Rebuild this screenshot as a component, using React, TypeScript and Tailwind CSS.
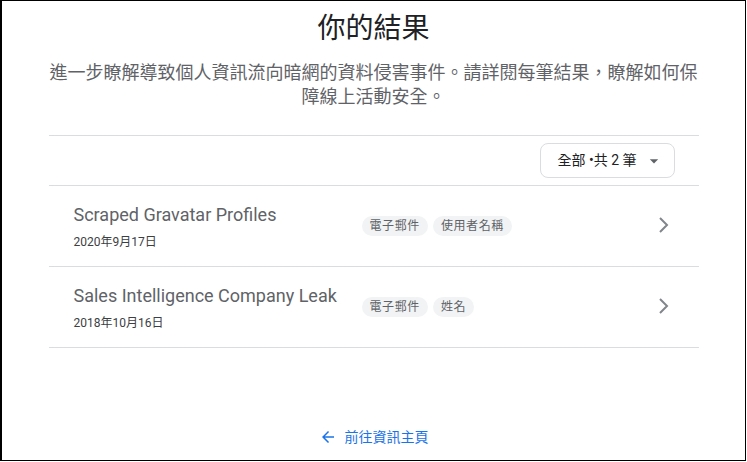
const breaches = [
  {
    name: "Scraped Gravatar Profiles",
    date: "2020年9月17日",
    tags: ["電子郵件", "使用者名稱"],
  },
  {
    name: "Sales Intelligence Company Leak",
    date: "2018年10月16日",
    tags: ["電子郵件", "姓名"],
  },
];

const font = "font-['Roboto','Noto_Sans_CJK_TC',sans-serif]";

export default function App() {
  return (
    <div className={`w-[747px] h-[462px] bg-white ${font}`}>
      <div className="w-[746px] h-[461px] border-t border-r border-b border-l-2 border-black flex flex-col">
        <div className="w-[650px] mx-auto">
          <h1 className="mt-[10px] text-center text-[28px] leading-9 text-[#202124]">你的結果</h1>
          <p className="mt-[14px] text-center text-[18px] leading-6 text-[#5f6368]">
            進一步瞭解導致個人資訊流向暗網的資料侵害事件。請詳閱每筆結果，瞭解如何保障線上活動安全。
          </p>

          <div className="mt-[26px] border-t border-[#dadce0]">
            <div className="flex justify-end py-[7px] pr-6 border-b border-[#dadce0]">
              <button className="h-[35px] flex items-center pl-4 pr-[10px] rounded-lg border border-[#dadce0] text-[14px] text-[#202124]">
                <span>全部 •共 2 筆</span>
                <svg className="ml-[7px]" width="20" height="20" viewBox="0 0 24 24" fill="#5f6368">
                  <path d="M7 10l5 5 5-5z" />
                </svg>
              </button>
            </div>

            {breaches.map((b) => (
              <div key={b.name} className="h-[81px] flex items-center pl-[25px] pr-5 border-b border-[#dadce0]">
                <div className="w-[288px]">
                  <div className="text-[18px] leading-6 text-[#5f6368]">{b.name}</div>
                  <div className="mt-[7px] text-[12px] leading-4 text-[#3c4043]">{b.date}</div>
                </div>
                <div className="flex-1 flex gap-[5px]">
                  {b.tags.map((t) => (
                    <span
                      key={t}
                      className="h-5 px-2 rounded-full bg-[#f1f3f4] text-[12px] leading-5 tracking-[0.6px] text-[#5f6368]"
                    >
                      {t}
                    </span>
                  ))}
                </div>
                <svg width="30" height="30" viewBox="0 0 30 30" fill="none" stroke="#80868b" strokeWidth="2">
                  <polyline points="11,7 18,14 11,21" />
                </svg>
              </div>
            ))}
          </div>
        </div>

        <div className="mt-[79px] flex items-center justify-center gap-2 text-[14px] leading-5 text-[#1a73e8]">
          <svg width="18" height="18" viewBox="0 0 24 24" fill="#1a73e8">
            <path d="M20 11H7.83l5.59-5.59L12 4l-8 8 8 8 1.41-1.41L7.83 13H20v-2z" />
          </svg>
          <span>前往資訊主頁</span>
        </div>
      </div>
    </div>
  );
}
